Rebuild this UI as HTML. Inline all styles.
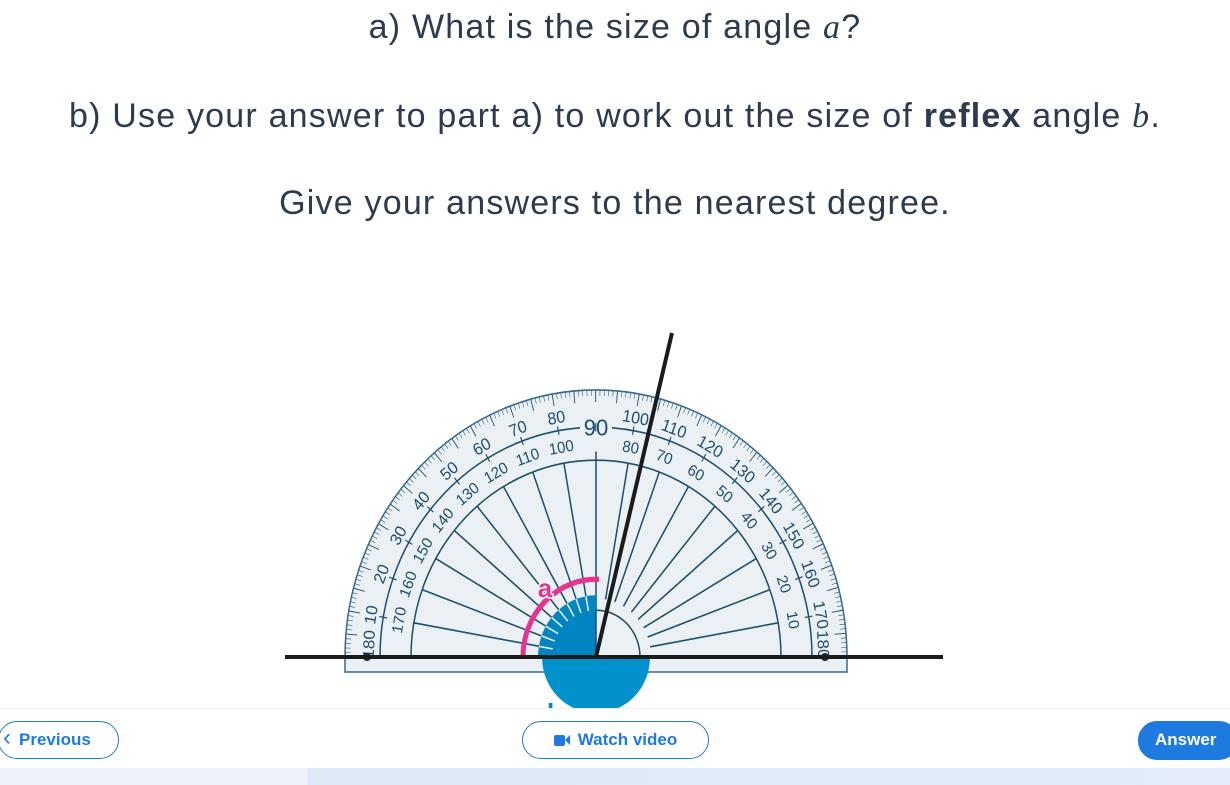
<!DOCTYPE html>
<html><head><meta charset="utf-8"><style>
html,body{margin:0;padding:0;width:1230px;height:785px;overflow:hidden;background:#fff;font-family:"Liberation Sans",sans-serif;}
.t{position:absolute;left:0;width:1230px;text-align:center;color:#2e3a4e;font-size:34px;letter-spacing:1.2px;white-space:nowrap}
.i{font-family:"Liberation Serif",serif;font-style:italic}
.bar{position:absolute;left:0;top:708px;width:1230px;height:60px;background:#fff;border-top:1px solid #eef1f6}
.low{position:absolute;left:0;top:768px;width:1230px;height:17px;background:linear-gradient(90deg,#edf2fb 0,#edf2fb 25%,#dfe9f7 25%,#e3ecf8 100%)}
.btn{position:absolute;top:721px;height:36px;border:1.5px solid #1f7ae0;border-radius:19px;color:#1f7ae0;font-weight:bold;font-size:17px;line-height:36px;box-sizing:content-box}
</style></head><body>
<div class="t" style="top:8px">a) What is the size of angle <span class="i">a</span>?</div>
<div class="t" style="top:97px">b) Use your answer to part a) to work out the size of <b>reflex</b> angle <span class="i">b</span>.</div>
<div class="t" style="top:184px">Give your answers to the nearest degree.</div>

<svg style="position:absolute;left:0;top:0" width="1230" height="785">
<defs><clipPath id="up"><rect x="-300" y="-300" width="600" height="300"/></clipPath></defs>
<g transform="translate(596,657)">
<ellipse cx="0" cy="0" rx="54" ry="56" fill="#0191cc"/>
<g transform="scale(1,1.064)" font-family="Liberation Sans,sans-serif" fill="#1d4e6e" clip-path="url(#up)">
<path d="M-251 0 A251 251 0 0 1 251 0 Z" fill="#eaf0f3" stroke="#3a6a8a" stroke-width="1.5"/>
<circle r="248" fill="none" stroke="#1d4e6e" stroke-width="5" pathLength="360" stroke-dasharray="0.12 0.88" stroke-dashoffset="0.06"/>
<circle r="245" fill="none" stroke="#1d4e6e" stroke-width="11" pathLength="360" stroke-dasharray="0.2 4.8" stroke-dashoffset="0.1"/>
<path d="M-216 0 A216 216 0 0 1 -16 -215.4 M16 -215.4 A216 216 0 0 1 216 0" fill="none" stroke="#1d4e6e" stroke-width="1.5"/>
<path d="M-185 0 A185 185 0 0 1 185 0" fill="none" stroke="#1d4e6e" stroke-width="1.5"/>
<g stroke="#1d4e6e" stroke-width="1.5">
<line x1="55" x2="185" transform="rotate(-10)"/><line x1="55" x2="185" transform="rotate(-20)"/><line x1="55" x2="185" transform="rotate(-30)"/><line x1="55" x2="185" transform="rotate(-40)"/><line x1="55" x2="185" transform="rotate(-50)"/><line x1="55" x2="185" transform="rotate(-60)"/><line x1="55" x2="185" transform="rotate(-70)"/><line x1="55" x2="185" transform="rotate(-80)"/><line x1="0" x2="193" transform="rotate(-90)"/><line x1="55" x2="185" transform="rotate(-100)"/><line x1="55" x2="185" transform="rotate(-110)"/><line x1="55" x2="185" transform="rotate(-120)"/><line x1="55" x2="185" transform="rotate(-130)"/><line x1="55" x2="185" transform="rotate(-140)"/><line x1="55" x2="185" transform="rotate(-150)"/><line x1="55" x2="185" transform="rotate(-160)"/><line x1="55" x2="185" transform="rotate(-170)"/>
</g>
<circle r="216" fill="none" stroke="#1d4e6e" stroke-width="8" pathLength="360" stroke-dasharray="0.3 9.7" stroke-dashoffset="0.15"/>
<g font-size="16" text-anchor="middle" transform="scale(1,1)">
<text transform="rotate(-170) translate(229,0) rotate(90)" dy="6">10</text>
<text transform="rotate(-160) translate(229,0) rotate(90)" dy="6">20</text>
<text transform="rotate(-150) translate(229,0) rotate(90)" dy="6">30</text>
<text transform="rotate(-140) translate(229,0) rotate(90)" dy="6">40</text>
<text transform="rotate(-130) translate(229,0) rotate(90)" dy="6">50</text>
<text transform="rotate(-120) translate(229,0) rotate(90)" dy="6">60</text>
<text transform="rotate(-110) translate(229,0) rotate(90)" dy="6">70</text>
<text transform="rotate(-100) translate(229,0) rotate(90)" dy="6">80</text>
<text transform="rotate(-80) translate(229,0) rotate(90)" dy="6">100</text>
<text transform="rotate(-70) translate(229,0) rotate(90)" dy="6">110</text>
<text transform="rotate(-60) translate(229,0) rotate(90)" dy="6">120</text>
<text transform="rotate(-50) translate(229,0) rotate(90)" dy="6">130</text>
<text transform="rotate(-40) translate(229,0) rotate(90)" dy="6">140</text>
<text transform="rotate(-30) translate(229,0) rotate(90)" dy="6">150</text>
<text transform="rotate(-20) translate(229,0) rotate(90)" dy="6">160</text>
<text transform="rotate(-10) translate(229,0) rotate(90)" dy="6">170</text>
<text transform="rotate(-3) translate(228,0) rotate(90)" dy="6">180</text>
<text transform="rotate(-177) translate(228,0) rotate(90)" dy="6">180</text>
<text transform="rotate(-90) translate(216,0) rotate(90)" dy="8" font-size="22">90</text>
</g>
<g font-size="15" text-anchor="middle">
<text transform="rotate(-170) translate(200,0) rotate(90)" dy="5">170</text>
<text transform="rotate(-160) translate(200,0) rotate(90)" dy="5">160</text>
<text transform="rotate(-150) translate(200,0) rotate(90)" dy="5">150</text>
<text transform="rotate(-140) translate(200,0) rotate(90)" dy="5">140</text>
<text transform="rotate(-130) translate(200,0) rotate(90)" dy="5">130</text>
<text transform="rotate(-120) translate(200,0) rotate(90)" dy="5">120</text>
<text transform="rotate(-110) translate(200,0) rotate(90)" dy="5">110</text>
<text transform="rotate(-100) translate(200,0) rotate(90)" dy="5">100</text>
<text transform="rotate(-80) translate(200,0) rotate(90)" dy="5">80</text>
<text transform="rotate(-70) translate(200,0) rotate(90)" dy="5">70</text>
<text transform="rotate(-60) translate(200,0) rotate(90)" dy="5">60</text>
<text transform="rotate(-50) translate(200,0) rotate(90)" dy="5">50</text>
<text transform="rotate(-40) translate(200,0) rotate(90)" dy="5">40</text>
<text transform="rotate(-30) translate(200,0) rotate(90)" dy="5">30</text>
<text transform="rotate(-20) translate(200,0) rotate(90)" dy="5">20</text>
<text transform="rotate(-10) translate(200,0) rotate(90)" dy="5">10</text>
</g>
<path d="M0 0 L0 -58 A58 58 0 0 0 -58 0 Z" fill="#0085c2"/>
<g stroke="#eaf0f3" stroke-width="1.5">
<line x1="44" x2="58" transform="rotate(-100)"/><line x1="44" x2="58" transform="rotate(-110)"/><line x1="44" x2="58" transform="rotate(-120)"/><line x1="44" x2="58" transform="rotate(-130)"/><line x1="44" x2="58" transform="rotate(-140)"/><line x1="44" x2="58" transform="rotate(-150)"/><line x1="44" x2="58" transform="rotate(-160)"/><line x1="44" x2="58" transform="rotate(-170)"/>
</g>
<path d="M0 0 L0 -44 A44 44 0 0 1 44 0 Z" fill="#eaf0f3" stroke="#1d4e6e" stroke-width="1.5"/>
<path d="M-73 0 A73 73 0 0 1 3 -73" fill="none" stroke="#e6338f" stroke-width="5"/>
</g>
<rect x="-251" y="0" width="502" height="15" fill="#eaf0f3" stroke="#3a6a8a" stroke-width="1.5"/>
<path d="M-54 0 A54 56 0 0 0 54 0 Z" fill="#0191cc"/>
<circle cx="-229" cy="0" r="4" fill="#1d2a33"/><circle cx="229" cy="0" r="4" fill="#1d2a33"/>
</g>
<line x1="285" y1="657" x2="943" y2="657" stroke="#1b1b1b" stroke-width="4"/>
<line x1="596" y1="657" x2="672" y2="333" stroke="#1b1b1b" stroke-width="4"/>
<text x="545" y="597" fill="#e6338f" font-family="Liberation Sans,sans-serif" font-weight="bold" font-size="26" text-anchor="middle" stroke="#fff" stroke-width="3" paint-order="stroke">a</text>
<text x="555" y="722" fill="#0085c2" font-family="Liberation Sans,sans-serif" font-weight="bold" font-size="26" text-anchor="middle">b</text>
</svg>

<div class="bar"></div>
<div class="low"></div>
<div class="btn" style="left:-2px;width:119px"><span style="position:absolute;left:4px;font-size:24px;font-weight:normal;top:-2px">&#x2039;</span><span style="position:absolute;left:20px">Previous</span></div>
<div class="btn" style="left:522px;width:185px;text-align:center"><span style="display:inline-block;width:11px;height:11px;background:#1f7ae0;border-radius:2px;vertical-align:-1px"></span><span style="display:inline-block;width:0;height:0;border-top:5px solid transparent;border-bottom:5px solid transparent;border-right:5px solid #1f7ae0;vertical-align:0px;margin-right:8px"></span>Watch video</div>
<div class="btn" style="left:1138px;width:100px;background:#1f7ae0;color:#fff;padding-left:16px;box-sizing:border-box;height:39px">Answer</div>
</body></html>
